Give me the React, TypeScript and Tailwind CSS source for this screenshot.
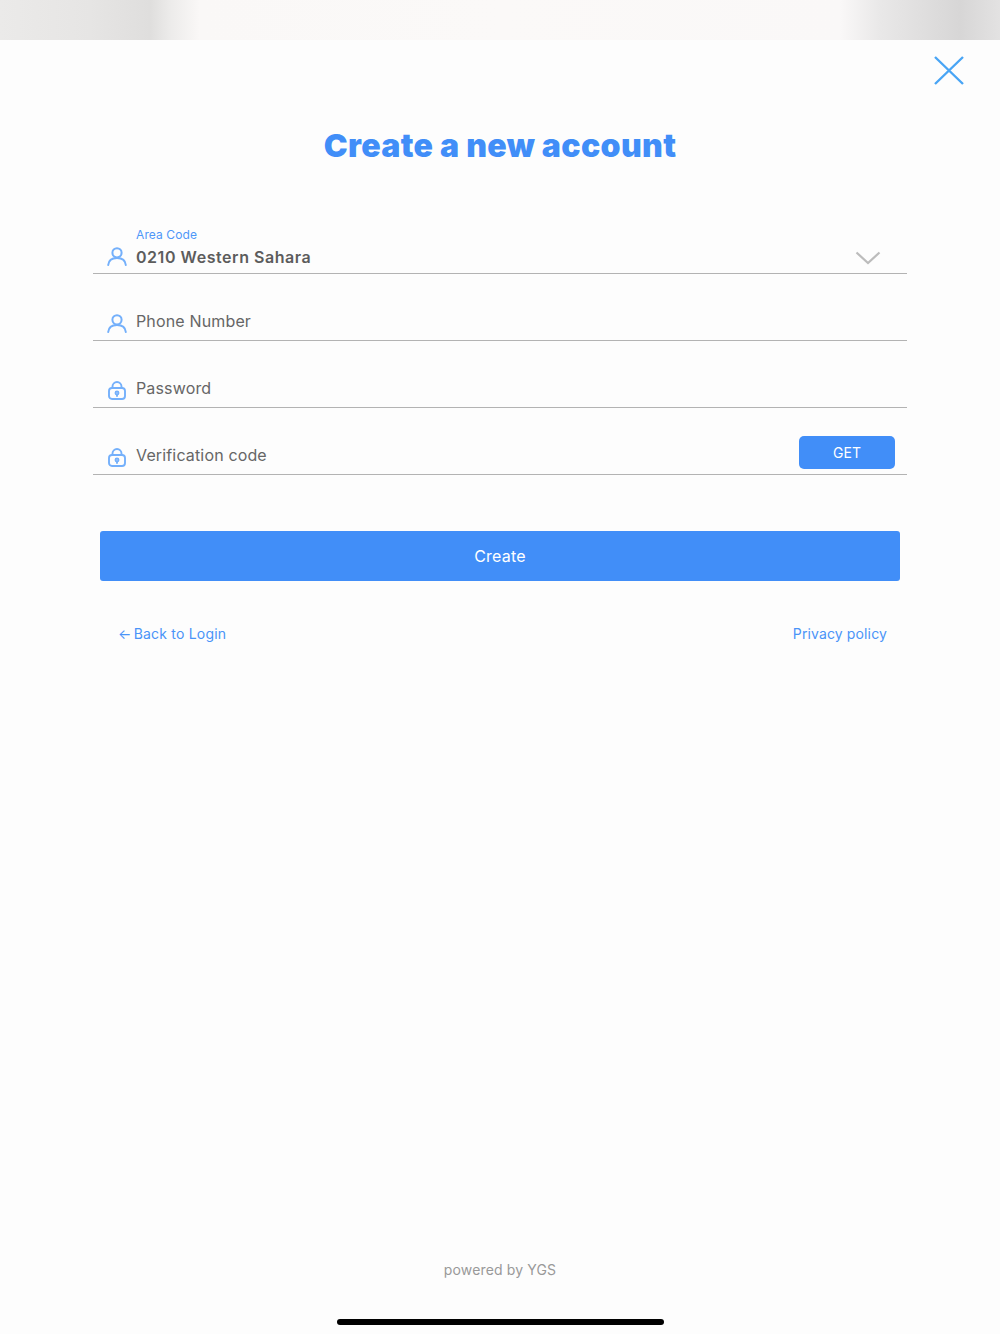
import { ReactNode } from "react"

const UserIcon = () => (
  <svg width="20" height="19" viewBox="0 0 20 19" fill="none" stroke="#74b0fb" strokeWidth="2" strokeLinecap="round">
    <circle cx="10" cy="5.8" r="4.6" />
    <path d="M1.2 18c.4-4.4 3.6-7 8.8-7s8.400 2.600 8.800 7" />
  </svg>
)

const LockIcon = () => (
  <svg width="18" height="19" viewBox="0 0 18 19" fill="none" stroke="#74b0fb" strokeWidth="1.9" strokeLinecap="round">
    <path d="M4.500 7V5.500a4.500 4.500 0 0 1 9 0V7" />
    <rect x="1" y="7" width="16" height="11" rx="3" />
    <circle cx="9" cy="12" r="1.500" />
    <path d="M9 13.500v1.500" />
  </svg>
)

function Field({
  icon,
  children,
  right,
  height,
}: {
  icon: ReactNode
  children: ReactNode
  right?: ReactNode
  height: string
}) {
  return (
    <div className={`flex items-end border-b border-[#b3b3b3] ${height}`}>
      <div className="flex w-[43px] shrink-0 justify-center pb-[7px] pl-[5px]">{icon}</div>
      <div className="min-w-0 flex-1">{children}</div>
      {right}
    </div>
  )
}

export default function App() {
  return (
    <div className="flex h-[1334px] w-[1000px] flex-col overflow-hidden bg-[#fdfdfd] font-['Inter',sans-serif]">
      <div className="h-10 shrink-0 bg-[linear-gradient(90deg,#ebeae9_0%,#e6e5e4_9%,#dfdedd_15%,#ecebea_17%,#faf8f7_20%,#fbf9f8_50%,#faf8f8_84%,#e9e8e8_88%,#e0dfdf_92%,#d7d6d6_96%,#e3e2e2_100%)]" />

      <div className="flex justify-end pr-9 pt-4">
        <svg width="30" height="29" viewBox="0 0 30 29" fill="none" stroke="#49a5f5" strokeWidth="2.4">
          <path d="M1 1 29 28M29 1 1 28" />
        </svg>
      </div>

      <h1 className="mt-[38px] text-center text-[32px] font-black leading-[46px] tracking-[0.35px] text-[#418ef8]">
        Create a new account
      </h1>

      <div className="mt-[59px] flex flex-col gap-[25px] px-[93px]">
        <Field
          icon={<UserIcon />}
          height="h-[46px]"
          right={
            <svg className="mb-[8px] mr-[26px]" width="26" height="14" viewBox="0 0 26 14" fill="none" stroke="#bcbcbc" strokeWidth="2.2">
              <path d="M1.500 1.500 13 12 24.500 1.500" />
            </svg>
          }
        >
          <p className="mb-0.5 text-[12px] leading-4 tracking-[0.1px] text-[#4f97f8]">Area Code</p>
          <p className="pb-[3px] text-[16px] font-semibold leading-[25px] tracking-[0.55px] text-[#5c5c5c]">0210 Western Sahara</p>
        </Field>
        <Field icon={<UserIcon />} height="h-[42px]">
          <p className="pb-[6px] text-[16px] leading-[25px] tracking-[0.15px] text-[#666666]">Phone Number</p>
        </Field>
        <Field icon={<LockIcon />} height="h-[42px]">
          <p className="pb-[6px] text-[16px] leading-[25px] tracking-[0.15px] text-[#666666]">Password</p>
        </Field>
        <Field
          icon={<LockIcon />}
          height="h-[42px]"
          right={
            <button className="mb-[5px] mr-3 h-[33px] w-24 rounded-[5px] bg-[#418ef8] text-[14px] text-white">GET</button>
          }
        >
          <p className="pb-[6px] text-[16px] leading-[25px] tracking-[0.15px] text-[#666666]">Verification code</p>
        </Field>
      </div>

      <div className="mt-14 px-[100px]">
        <button className="h-[50px] w-full rounded-[3px] bg-[#418ef8] text-[16px] tracking-[0.2px] text-white">Create</button>
      </div>

      <div className="mt-[43px] flex items-center justify-between pl-[118px] pr-[113px] text-[14px] leading-5 text-[#4a94f8]">
        <span className="tracking-[0.2px]">
          <span className="-mr-0.5">←</span> Back to Login
        </span>
        <span className="tracking-[0.13px]">Privacy policy</span>
      </div>

      <div className="mt-auto flex flex-col items-center">
        <p className="text-[14px] leading-5 tracking-[0.15px] text-[#999999]">powered by YGS</p>
        <div className="mb-[9px] mt-[39px] h-[6px] w-[327px] rounded-full bg-black" />
      </div>
    </div>
  )
}
